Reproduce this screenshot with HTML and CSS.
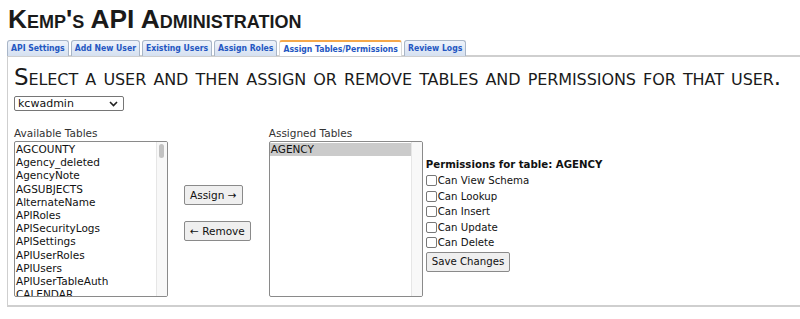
FILE: index.html
```html
<!DOCTYPE html>
<html>
<head>
<meta charset="utf-8">
<link rel="stylesheet" href="styles.css">
</head>
<body>
<h1 class="title">Kemp's API Administration</h1>
<ul class="tabs">
  <li class="tab">API Settings</li>
  <li class="tab">Add New User</li>
  <li class="tab">Existing Users</li>
  <li class="tab">Assign Roles</li>
  <li class="tab active">Assign Tables/Permissions</li>
  <li class="tab">Review Logs</li>
</ul>
<div class="panel">
  <h2 class="heading">Select a user and then assign or remove tables and permissions for that user.</h2>
  <div class="user-select">
    <span class="select-value">kcwadmin</span>
    <svg class="chev" width="9" height="6" viewBox="0 0 9 6"><path d="M1 1 L4.5 4.5 L8 1" fill="none" stroke="#222" stroke-width="1.6"/></svg>
  </div>
  <div class="assign-row">
    <div class="col">
      <div class="label">Available Tables</div>
      <div class="listbox">
        <div class="items">
          <div class="item">AGCOUNTY</div>
          <div class="item">Agency_deleted</div>
          <div class="item">AgencyNote</div>
          <div class="item">AGSUBJECTS</div>
          <div class="item">AlternateName</div>
          <div class="item">APIRoles</div>
          <div class="item">APISecurityLogs</div>
          <div class="item">APISettings</div>
          <div class="item">APIUserRoles</div>
          <div class="item">APIUsers</div>
          <div class="item">APIUserTableAuth</div>
          <div class="item">CALENDAR</div>
        </div>
        <div class="scrollbar"><div class="thumb"></div></div>
      </div>
    </div>
    <div class="buttons">
      <button class="btn assign">Assign →</button>
      <button class="btn remove">← Remove</button>
    </div>
    <div class="col">
      <div class="label">Assigned Tables</div>
      <div class="listbox">
        <div class="items">
          <div class="item selected">AGENCY</div>
        </div>
        <div class="scrollbar"></div>
      </div>
    </div>
    <div class="perms">
      <div class="perm-title">Permissions for table: AGENCY</div>
      <label class="perm"><span class="box"></span>Can View Schema</label>
      <label class="perm"><span class="box"></span>Can Lookup</label>
      <label class="perm"><span class="box"></span>Can Insert</label>
      <label class="perm"><span class="box"></span>Can Update</label>
      <label class="perm"><span class="box"></span>Can Delete</label>
      <button class="btn save">Save Changes</button>
    </div>
  </div>
</div>
</body>
</html>
```
FILE: styles.css
```css
html, body {
  margin: 0;
  padding: 0;
  background: #fff;
  overflow: hidden;
}
body {
  font-family: "DejaVu Sans", Verdana, sans-serif;
  font-size: 11px;
  color: #111;
}
.title {
  font-family: "Liberation Sans", Arial, sans-serif;
  font-variant: small-caps;
  font-weight: bold;
  font-size: 26.3px;
  line-height: 30px;
  margin: 4px 0 0 8px;
  color: #1a1a1a;
}
.tabs {
  list-style: none;
  margin: 6px 0 0 7px;
  padding: 0;
  display: flex;
  gap: 2px;
  height: 16px;
}
.tab {
  font-family: "DejaVu Sans Condensed", "DejaVu Sans", sans-serif;
  font-weight: bold;
  font-size: 8.6px;
  line-height: 15px;
  color: #2457c2;
  padding: 0 3px;
  border: 1px solid #a9b6c8;
  border-bottom: none;
  border-radius: 3px 3px 0 0;
  background: linear-gradient(#eef3fb, #d5e0f0);
}
.tab.active {
  background: #fff;
  border-top: 2px solid #f5a84a;
  line-height: 14px;
  border-color: #d8d8d8;
  border-top-color: #f5a84a;
}
.panel {
  border-top: 2px solid #cfcfcf;
  border-left: 1px solid #cfcfcf;
  border-bottom: 2px solid #cfcfcf;
  margin-left: 7px;
  margin-top: -1px;
  padding: 0 0 8px 6px;
}
.heading {
  font-family: "DejaVu Sans", Verdana, sans-serif;
  font-variant: small-caps;
  font-weight: normal;
  font-size: 23px;
  letter-spacing: -0.09px;
  line-height: 26px;
  margin: 7px 0 0 0;
  color: #1a1a1a;
  white-space: nowrap;
}
.user-select {
  margin-top: 6px;
  height: 13px;
  border: 1px solid #767676;
  border-radius: 2px;
  display: flex;
  align-items: center;
  justify-content: space-between;
  padding: 0 5px 0 3px;
  box-sizing: content-box;
  width: 100px;
}
.select-value {
  font-size: 11px;
  line-height: 13px;
}
.assign-row {
  display: flex;
  margin-top: 16px;
}
.col {
  display: flex;
  flex-direction: column;
}
.label {
  font-size: 10.5px;
  line-height: 13px;
  color: #333;
  margin-bottom: 1px;
}
.listbox {
  width: 152px;
  height: 154px;
  border: 1px solid #8a8a8a;
  border-radius: 2px;
  display: flex;
  overflow: hidden;
}
.items {
  flex: 1;
  overflow: hidden;
  padding-top: 1px;
}
.item {
  font-size: 10.5px;
  line-height: 13.2px;
  padding-left: 1px;
  white-space: nowrap;
  color: #111;
}
.item.selected {
  background: #cbcbcb;
}
.scrollbar {
  width: 10px;
  background: #f8f8f8;
  border-left: 1px solid #e6e6e6;
  position: relative;
}
.thumb {
  position: absolute;
  top: 2px;
  left: 2px;
  width: 5px;
  height: 14px;
  border-radius: 3px;
  background: #c2c2c2;
}
.buttons {
  display: flex;
  flex-direction: column;
  align-items: flex-start;
  gap: 16px;
  margin: 58px 18px 0 16px;
}
.btn {
  font-family: "DejaVu Sans", Verdana, sans-serif;
  font-size: 10.5px;
  line-height: 14px;
  padding: 2px 5px;
  border: 1px solid #8a8a8a;
  border-radius: 2px;
  background: #efefef;
  color: #111;
}
.perms {
  display: flex;
  flex-direction: column;
  align-items: flex-start;
  margin-left: 3px;
  padding-top: 31px;
}
.perm-title {
  font-weight: bold;
  font-size: 10.2px;
  line-height: 14px;
  margin-bottom: 1px;
}
.perm {
  display: flex;
  align-items: center;
  font-size: 10.2px;
  line-height: 15.5px;
}
.box {
  width: 9px;
  height: 9px;
  border: 1px solid #777;
  border-radius: 2px;
  background: #fff;
  margin-right: 1px;
}
.save {
  margin-top: 1px;
  font-size: 10.2px;
  padding: 2px 5px;
}
```
